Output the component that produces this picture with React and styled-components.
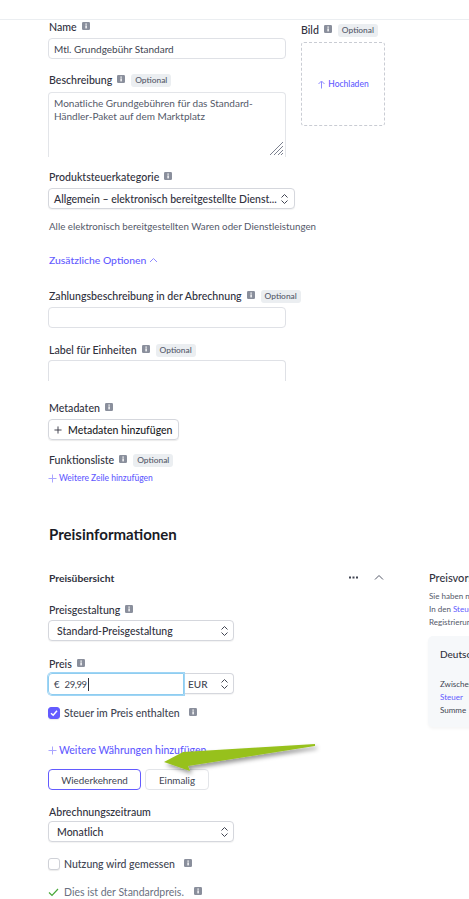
import React from "react";
import styled, { createGlobalStyle } from "styled-components";

const Global = createGlobalStyle`
  html, body { margin: 0; padding: 0; background: #fff; }
  body { font-family: "Lato", "Noto Sans", sans-serif; color: #3c4257; overflow: hidden; }
  * { box-sizing: border-box; }
`;

const Page = styled.div`
  position: relative;
  width: 469px;
  height: 899px;
  overflow: hidden;
  background: #fff;
`;
const TopBar = styled.div`
  height: 20px;
  border-bottom: 1px solid #ebeef1;
`;
const Content = styled.div`
  padding-left: 48px;
`;
const FormRow = styled.div`
  display: flex;
  gap: 15px;
  align-items: flex-start;
`;
const FormCol = styled.div`
  width: 238px;
`;
const ImageCol = styled.div`
  width: 84px;
  padding-top: 3px;
`;
const Field = styled.div`
  margin-top: ${(p) => p.$mt || 0}px;
`;
const LabelRow = styled.div`
  display: flex;
  align-items: center;
  height: 14px;
  margin-bottom: ${(p) => (p.$mb === undefined ? 4 : p.$mb)}px;
  padding-left: ${(p) => (p.$flush ? 0 : 1)}px;
  font-size: 10.6px;
  font-weight: 500;
  color: #30313d;
  white-space: nowrap;
`;
const InfoBox = styled.svg`
  width: 8px;
  height: 8px;
  margin: -3px 0 0 5px;
  flex: none;
`;
const Badge = styled.span`
  margin-left: 6px;
  height: 13px;
  padding: 0 4px;
  border-radius: 3px;
  background: #ebeef1;
  color: #545969;
  font-size: 8.4px;
  line-height: 13px;
`;
const TextBox = styled.div`
  height: 21px;
  width: 238px;
  padding: 0 5px;
  display: flex;
  align-items: center;
  border: 1px solid #dfe1e6;
  border-radius: 4px;
  background: #fff;
  font-size: 10px;
  color: #414552;
  white-space: nowrap;
`;
const CutBox = styled(TextBox)`
  border-bottom: none;
  border-bottom-left-radius: 0;
  border-bottom-right-radius: 0;
`;
const AreaBox = styled.div`
  position: relative;
  width: 238px;
  height: 65px;
  padding: 4px 5px;
  border: 1px solid #e3e5e9;
  border-bottom: none;
  border-radius: 4px 4px 0 0;
  font-size: 10px;
  line-height: 13px;
  color: #545969;
`;
const Grip = styled.svg`
  position: absolute;
  right: 1px;
  bottom: 1px;
  width: 15px;
  height: 15px;
`;
const Upload = styled.div`
  margin-top: 3px;
  width: 84px;
  height: 84px;
  display: flex;
  align-items: center;
  justify-content: center;
  gap: 2px;
  border: 1px dashed #c9ccd3;
  border-radius: 3px;
  color: #635bff;
  font-size: 8.5px;
  font-weight: 500;
`;
const SelectBox = styled.div`
  width: ${(p) => p.$w}px;
  height: 21px;
  padding: 0 ${(p) => (p.$wide ? 5 : 4)}px 0 ${(p) => (p.$wide ? 5 : 8)}px;
  display: flex;
  align-items: center;
  justify-content: space-between;
  border: 1px solid #d5d7dd;
  border-radius: 4px;
  background: #fff;
  box-shadow: 0 1px 1px rgba(0, 0, 0, 0.05);
  font-size: 10.5px;
  font-weight: 500;
  color: #30313d;
  white-space: nowrap;
`;
const Help = styled.div`
  margin-top: 10px;
  padding-left: 1px;
  font-size: 9.75px;
  line-height: 14px;
  color: #545969;
  white-space: nowrap;
`;
const Toggle = styled.div`
  margin-top: 20px;
  padding-left: 1px;
  display: flex;
  align-items: center;
  gap: 3px;
  color: #635bff;
  font-size: 10.4px;
  font-weight: 500;
  line-height: 14px;
`;
const AddButton = styled.div`
  width: 131px;
  height: 21px;
  display: flex;
  align-items: center;
  gap: 6px;
  padding-left: 5px;
  border: 1px solid #d5d7dd;
  border-radius: 4px;
  box-shadow: 0 1px 1px rgba(0, 0, 0, 0.08);
  color: #1a1b25;
  font-size: 10.5px;
  font-weight: 500;
  white-space: nowrap;
`;
const SmallLink = styled.div`
  margin-top: ${(p) => p.$mt || 0}px;
  display: flex;
  align-items: center;
  gap: 2px;
  color: #635bff;
  font-size: ${(p) => p.$size || 8.5}px;
  font-weight: 500;
  line-height: 14px;
  white-space: nowrap;
`;
const SectionTitle = styled.h2`
  margin: 39px 0 0 1px;
  height: 20px;
  font-size: 15px;
  line-height: 20px;
  font-weight: 700;
  color: #1a1b25;
`;
const PriceRow = styled.div`
  margin-top: 27px;
  display: flex;
  gap: 45px;
`;
const PriceCol = styled.div`
  flex: none;
  width: 336px;
`;
const PriceHead = styled.div`
  height: 14px;
  display: flex;
  align-items: center;
  justify-content: space-between;
  padding-left: 1px;
  font-size: 10.3px;
  font-weight: 700;
  color: #30313d;
`;
const HeadActions = styled.div`
  display: flex;
  align-items: center;
  gap: 16px;
  margin-top: -2px;
`;
const PriceInputs = styled.div`
  display: flex;
  width: 186px;
  height: 21px;
`;
const AmountInput = styled.div`
  flex: none;
  width: 136px;
  height: 22px;
  display: flex;
  align-items: center;
  padding-left: 5px;
  border: 1px solid #8fcdf0;
  box-shadow: 0 0 0 1px #9fd5f5;
  border-radius: 4px 0 0 4px;
  font-size: 9.5px;
  color: #414552;
  position: relative;
  z-index: 1;
`;
const Amount = styled.span`
  margin-left: 5px;
  padding-right: 1px;
  border-right: 1px solid #30313d;
  line-height: 13px;
  letter-spacing: -0.4px;
`;
const CurrencySelect = styled.div`
  flex: 1;
  height: 21px;
  display: flex;
  align-items: center;
  justify-content: space-between;
  padding: 0 4px 0 4px;
  border: 1px solid #d5d7dd;
  border-left: none;
  border-radius: 0 4px 4px 0;
  box-shadow: 0 1px 1px rgba(0, 0, 0, 0.05);
  font-size: 10px;
  font-weight: 500;
  color: #414552;
`;
const CheckRow = styled.div`
  margin-top: ${(p) => p.$mt}px;
  display: flex;
  align-items: center;
  gap: 4px;
  height: 14px;
  font-size: 10.5px;
  font-weight: 500;
  color: #414552;
  white-space: nowrap;
`;
const CheckBox = styled.span`
  flex: none;
  width: 12px;
  height: 12px;
  display: flex;
  align-items: center;
  justify-content: center;
  border-radius: 3px;
  background: ${(p) => (p.$on ? "#635bff" : "#fff")};
  border: 1px solid ${(p) => (p.$on ? "#635bff" : "#cfd1d7")};
  box-shadow: 0 1px 1px rgba(0, 0, 0, 0.08);
`;
const Segments = styled.div`
  margin-top: 12px;
  display: flex;
  gap: 4px;
`;
const Segment = styled.div`
  width: ${(p) => p.$w}px;
  height: 21px;
  display: flex;
  align-items: center;
  justify-content: center;
  border: 1px solid ${(p) => (p.$on ? "#635bff" : "#e3e5e9")};
  border-radius: 4px;
  font-size: 9.8px;
  color: #414552;
`;
const DefaultRow = styled(CheckRow)`
  color: #6a7080;
  font-weight: 400;
  gap: 5px;
`;
const Preview = styled.div`
  flex: none;
  width: 200px;
`;
const PreviewTitle = styled.div`
  height: 14px;
  font-size: 11px;
  line-height: 14px;
  font-weight: 500;
  color: #30313d;
  white-space: nowrap;
`;
const PreviewText = styled.div`
  margin-top: 5px;
  font-size: 8px;
  line-height: 13px;
  color: #545969;
  white-space: nowrap;
`;
const InlineLink = styled.span`
  color: #635bff;
`;
const PreviewCard = styled.div`
  margin: 7px 0 0 -1px;
  height: 91px;
  padding: 11px 12px;
  border-radius: 5px;
  background: #f6f8fa;
  box-shadow: 0 2px 3px rgba(0, 0, 0, 0.04);
`;
const CardTitle = styled.div`
  font-size: 10px;
  line-height: 14px;
  font-weight: 500;
  color: #30313d;
`;
const CardLines = styled.div`
  margin-top: 17px;
  font-size: 8px;
  line-height: 13px;
  color: #414552;
`;
const ArrowOverlay = styled.svg`
  position: absolute;
  left: 150px;
  top: 735px;
  width: 180px;
  height: 50px;
  overflow: visible;
`;

const Info = () => (
  <InfoBox viewBox="0 0 8 8">
    <rect width="8" height="8" rx="1.2" fill="#8a8f9c" />
    <rect x="3.4" y="3.4" width="1.4" height="3" fill="#fff" />
    <rect x="3.4" y="1.5" width="1.4" height="1.2" fill="#fff" />
  </InfoBox>
);
const Optional = () => <Badge>Optional</Badge>;
const Chevrons = () => (
  <svg width="9" height="12" viewBox="0 0 9 12" fill="none" stroke="#414552" strokeWidth="1">
    <path d="M1.5 4.5 4.5 1.5l3 3M1.5 7.5l3 3 3-3" />
  </svg>
);
const Plus = ({ size = 9, color = "#a9a5ff" }) => (
  <svg width={size} height={size} viewBox="0 0 9 9" stroke={color} strokeWidth="1" style={{ flex: "none" }}>
    <path d="M4.5 0.5v8M0.5 4.5h8" />
  </svg>
);

export default function App() {
  return (
    <Page>
      <Global />
      <TopBar />
      <Content>
        <FormRow>
          <FormCol>
            <Field>
              <LabelRow>Name<Info /></LabelRow>
              <TextBox>Mtl. Grundgebühr Standard</TextBox>
            </Field>
            <Field $mt={14}>
              <LabelRow $mb={5}>Beschreibung<Info /><Optional /></LabelRow>
              <AreaBox>
                Monatliche Grundgebühren für das Standard-
                <br />
                Händler-Paket auf dem Marktplatz
                <Grip viewBox="0 0 15 15" stroke="#7d8290" strokeWidth="1">
                  <path d="M1 14 14 1M5 14l9-9M9 14l5-5M12 14l2-2" />
                </Grip>
              </AreaBox>
            </Field>
            <Field $mt={13}>
              <LabelRow>Produktsteuerkategorie<Info /></LabelRow>
              <SelectBox $w={247} $wide>
                Allgemein – elektronisch bereitgestellte Dienst...
                <Chevrons />
              </SelectBox>
            </Field>
            <Help>Alle elektronisch bereitgestellten Waren oder Dienstleistungen</Help>
            <Toggle>
              Zusätzliche Optionen
              <svg width="9" height="6" viewBox="0 0 9 6" fill="none" stroke="#8f8aff" strokeWidth="1">
                <path d="M1 5l3.5-3.5L8 5" />
              </svg>
            </Toggle>
            <Field $mt={22}>
              <LabelRow>Zahlungsbeschreibung in der Abrechnung<Info /><Optional /></LabelRow>
              <TextBox />
            </Field>
            <Field $mt={15}>
              <LabelRow $mb={3}>Label für Einheiten<Info /><Optional /></LabelRow>
              <CutBox />
            </Field>
            <Field $mt={20}>
              <LabelRow>Metadaten<Info /></LabelRow>
              <AddButton><Plus size={8} color="#30313d" />Metadaten hinzufügen</AddButton>
            </Field>
            <Field $mt={13}>
              <LabelRow $mb={4}>Funktionsliste<Info /><Optional /></LabelRow>
              <SmallLink><Plus />Weitere Zeile hinzufügen</SmallLink>
            </Field>
          </FormCol>
          <ImageCol>
            <LabelRow $mb={5} $flush>Bild<Info /><Optional /></LabelRow>
            <Upload>
              <svg width="9" height="9" viewBox="0 0 9 9" fill="none" stroke="#8f8aff" strokeWidth="1">
                <path d="M4.5 8.5v-7M1.5 4l3-3 3 3" />
              </svg>
              Hochladen
            </Upload>
          </ImageCol>
        </FormRow>
        <SectionTitle>Preisinformationen</SectionTitle>
        <PriceRow>
          <PriceCol>
            <PriceHead>
              Preisübersicht
              <HeadActions>
                <svg width="9" height="3" viewBox="0 0 9 3" fill="#414552">
                  <rect x="0" y="0.5" width="2" height="2" />
                  <rect x="3.5" y="0.5" width="2" height="2" />
                  <rect x="7" y="0.5" width="2" height="2" />
                </svg>
                <svg width="10" height="6" viewBox="0 0 10 6" fill="none" stroke="#545969" strokeWidth="1">
                  <path d="M1 5.5l4-4 4 4" />
                </svg>
              </HeadActions>
            </PriceHead>
            <Field $mt={18}>
              <LabelRow $mb={3}>Preisgestaltung<Info /></LabelRow>
              <SelectBox $w={186}>Standard-Preisgestaltung<Chevrons /></SelectBox>
            </Field>
            <Field $mt={16}>
              <LabelRow $mb={2}>Preis<Info /></LabelRow>
              <PriceInputs>
                <AmountInput>€<Amount>29,99</Amount></AmountInput>
                <CurrencySelect>EUR<Chevrons /></CurrencySelect>
              </PriceInputs>
            </Field>
            <CheckRow $mt={12}>
              <CheckBox $on>
                <svg width="8" height="8" viewBox="0 0 8 8" fill="none" stroke="#fff" strokeWidth="1.5">
                  <path d="M1 4.2 3.2 6.2 7 1.8" />
                </svg>
              </CheckBox>
              Steuer im Preis enthalten<Info />
            </CheckRow>
            <SmallLink $mt={23} $size={10.5}><Plus />Weitere Währungen hinzufügen</SmallLink>
            <Segments>
              <Segment $w={93} $on>Wiederkehrend</Segment>
              <Segment $w={64}>Einmalig</Segment>
            </Segments>
            <Field $mt={15}>
              <LabelRow $mb={2}>Abrechnungszeitraum</LabelRow>
              <SelectBox $w={186}>Monatlich<Chevrons /></SelectBox>
            </Field>
            <CheckRow $mt={15}>
              <CheckBox />
              Nutzung wird gemessen<Info />
            </CheckRow>
            <DefaultRow $mt={14}>
              <svg width="11" height="9" viewBox="0 0 11 9" fill="none" stroke="#48a838" strokeWidth="1.2">
                <path d="M1 4.5 4 7.5 10 1" />
              </svg>
              Dies ist der Standardpreis.<Info />
            </DefaultRow>
          </PriceCol>
          <Preview>
            <PreviewTitle>Preisvorschau</PreviewTitle>
            <PreviewText>
              Sie haben noch keine Steuer konfiguriert.
              <br />
              In den <InlineLink>Steuereinstellungen</InlineLink> können Sie Ihre
              <br />
              Registrierungen verwalten.
            </PreviewText>
            <PreviewCard>
              <CardTitle>Deutschland</CardTitle>
              <CardLines>
                Zwischensumme
                <br />
                <InlineLink>Steuer</InlineLink>
                <br />
                Summe
              </CardLines>
            </PreviewCard>
          </Preview>
        </PriceRow>
      </Content>
      <ArrowOverlay viewBox="150 735 180 50">
        <defs>
          <filter id="arrowShadow" x="-20%" y="-50%" width="140%" height="220%">
            <feDropShadow dx="2" dy="3" stdDeviation="2" floodColor="#000" floodOpacity="0.4" />
          </filter>
        </defs>
        <polygon points="164,762 183,752 315,744 315,746 188,766 190,771" fill="#97c11c" filter="url(#arrowShadow)" />
      </ArrowOverlay>
    </Page>
  );
}
